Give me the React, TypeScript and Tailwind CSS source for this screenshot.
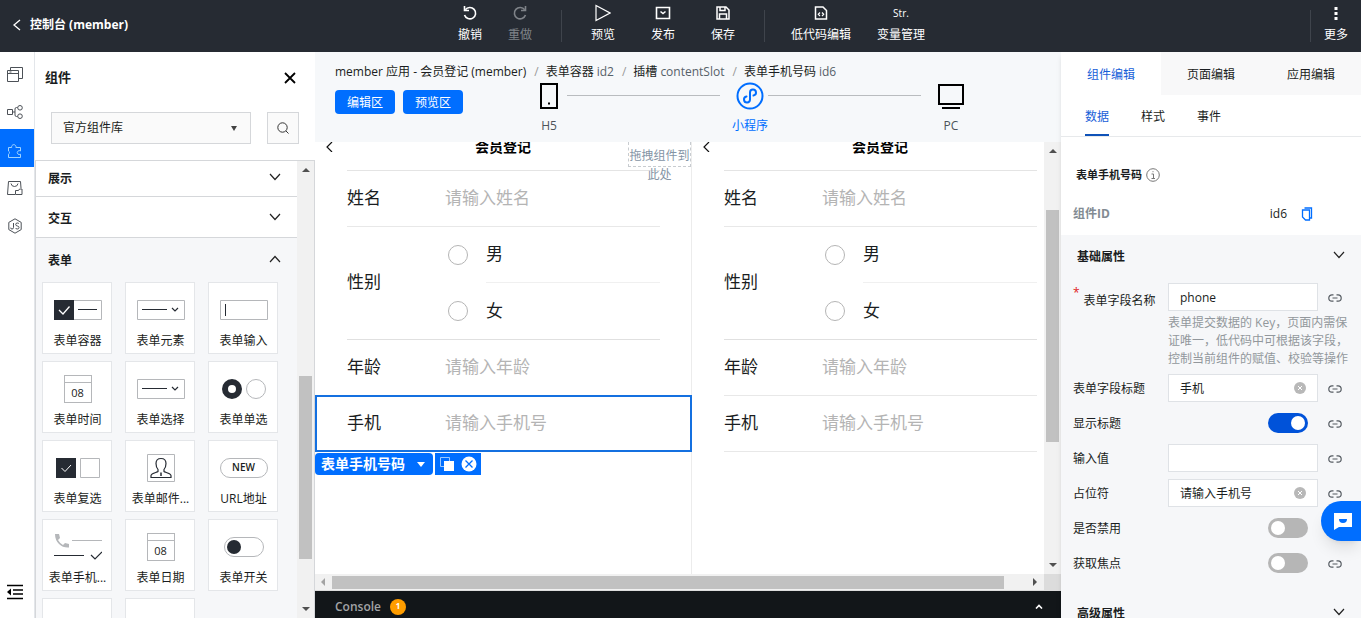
import { useState } from "react";
import type { ReactNode } from "react";

const toolGroups = [
  {
    divider: "",
    tools: [
      { label: "撤销", icon: <UndoIcon />, width: "w-[50px]" },
      { label: "重做", icon: <RedoIcon />, width: "w-[50px]", disabled: true },
    ],
  },
  {
    divider: "ml-4 mr-[11px]",
    tools: [
      { label: "预览", icon: <PlayIcon />, width: "w-[60px]" },
      { label: "发布", icon: <PublishIcon />, width: "w-[60px]" },
      { label: "保存", icon: <SaveIcon />, width: "w-[60px]" },
    ],
  },
  {
    divider: "ml-[11px] mr-4",
    tools: [
      { label: "低代码编辑", icon: <CodeFileIcon />, width: "w-[80px]" },
      { label: "变量管理", icon: <span className="text-[10px] leading-4">Str.</span>, width: "w-[80px]" },
    ],
  },
];

const components = [
  { label: "表单容器", icon: <ContainerGlyph /> },
  { label: "表单元素", icon: <SelectGlyph /> },
  { label: "表单输入", icon: <InputGlyph /> },
  { label: "表单时间", icon: <CalendarGlyph /> },
  { label: "表单选择", icon: <SelectGlyph /> },
  { label: "表单单选", icon: <RadioGlyph /> },
  { label: "表单复选", icon: <CheckGlyph /> },
  { label: "表单邮件...", icon: <PersonGlyph /> },
  { label: "URL地址", icon: <UrlGlyph /> },
  { label: "表单手机...", icon: <PhoneGlyph /> },
  { label: "表单日期", icon: <CalendarGlyph /> },
  { label: "表单开关", icon: <SwitchGlyph /> },
  { label: "", icon: null },
  { label: "", icon: null },
];

export default function App() {
  return (
    <div className="flex h-screen flex-col overflow-hidden bg-white font-['Open_Sans','Noto_Sans_CJK_SC',sans-serif] text-xs text-[#1a1d21]">
      <TopBar />
      <div className="flex min-h-0 flex-1">
        <SideNav />
        <ComponentPanel />
        <Workspace />
        <PropertyPanel />
      </div>
      <button
        aria-label="客服"
        className="fixed right-0 bottom-[77px] z-20 flex h-10 w-10 items-center justify-center rounded-l-full bg-[#006eff] shadow-lg"
      >
        <svg width="20" height="20" viewBox="0 0 20 20" className="ml-1">
          <path d="M1 2h18v14H6l-5 3z" fill="#fff" />
          <path d="M6 8h8a4 4 0 0 1-8 0z" fill="#006eff" />
        </svg>
      </button>
    </div>
  );
}

function TopBar() {
  return (
    <header className="flex h-[52px] shrink-0 items-center bg-[#262b33] text-white">
      <a href="#" className="flex w-[445px] shrink-0 items-center gap-2 pb-0.5 pl-3 font-bold">
        <svg width="10" height="12" viewBox="0 0 10 12" fill="none" stroke="currentColor" strokeWidth="1.3">
          <path d="M8 1 2 6l6 5" />
        </svg>
        控制台 (member)
      </a>
      {toolGroups.map((group, i) => (
        <div key={i} className="flex items-center">
          {group.divider && <div className={`h-8 w-px bg-[#3f444c] ${group.divider}`} />}
          {group.tools.map((tool) => (
            <ToolButton key={tool.label} {...tool} />
          ))}
        </div>
      ))}
      <div className="ml-auto flex items-center">
        <div className="h-8 w-px bg-[#3f444c]" />
        <ToolButton
          label="更多"
          width="w-[50px]"
          icon={
            <svg width="4" height="16" viewBox="0 0 4 16" fill="#fff">
              <path d="M.5 2h3v3h-3zM.5 7h3v3h-3zM.5 12h3v3h-3z" />
            </svg>
          }
        />
      </div>
    </header>
  );
}

function ToolButton({
  label,
  icon,
  width,
  disabled,
}: {
  label: string;
  icon: ReactNode;
  width: string;
  disabled?: boolean;
}) {
  return (
    <button
      disabled={disabled}
      className={`${width} flex flex-col items-center gap-1 pb-0.5 disabled:text-[#7f8389]`}
    >
      <span className="flex h-4 items-center">{icon}</span>
      <span className="leading-5">{label}</span>
    </button>
  );
}

function SideNav() {
  const items = [
    { name: "页面", icon: <PagesIcon /> },
    { name: "流程", icon: <FlowIcon /> },
    { name: "组件", icon: <PuzzleIcon />, active: true },
    { name: "素材", icon: <AssetIcon /> },
    { name: "JS", icon: <JsIcon /> },
  ];
  return (
    <nav className="flex w-[35px] shrink-0 flex-col border-r border-[#e3e6ea] pt-px">
      {items.map((item) => (
        <button
          key={item.name}
          aria-label={item.name}
          className={`flex h-[38px] w-full items-center justify-center pt-1 pr-1 ${
            item.active ? "bg-[#006eff] text-[#9fd3ff]" : "text-[#4c5157]"
          }`}
        >
          {item.icon}
        </button>
      ))}
      <button aria-label="收起" className="mt-auto mb-[18px] flex justify-center pr-1 text-black">
        <svg width="18" height="16" viewBox="0 0 18 16" fill="none" stroke="currentColor" strokeWidth="1.6">
          <path d="M1 1.5h16M7 6h10M7 10h10M1 14.5h16" />
          <path d="M5 4.5v7L1 8z" fill="currentColor" stroke="none" />
        </svg>
      </button>
    </nav>
  );
}

function ComponentPanel() {
  return (
    <aside className="flex w-[280px] shrink-0 flex-col">
      <div className="flex h-[60px] shrink-0 items-center justify-between pr-[19px] pb-2 pl-2.5">
        <h2 className="text-[13px] font-bold">组件</h2>
        <button aria-label="关闭">
          <svg width="12" height="12" viewBox="0 0 12 12" stroke="#000" strokeWidth="1.8">
            <path d="m1 1 10 10M11 1 1 11" />
          </svg>
        </button>
      </div>
      <div className="flex h-12 shrink-0 gap-4 pl-4">
        <div className="relative h-8 w-[200px]">
          <select
            aria-label="组件库"
            className="h-full w-full appearance-none border border-[#d5d7da] bg-[#fafafa] px-[11px]"
          >
            <option>官方组件库</option>
          </select>
          <svg width="6" height="5" viewBox="0 0 6 5" className="pointer-events-none absolute top-3.5 right-3.5">
            <path d="M0 0h6L3 5z" fill="#444" />
          </svg>
        </div>
        <button
          aria-label="搜索"
          className="flex h-8 w-8 items-center justify-center border border-[#d5d7da] bg-[#fafafa]"
        >
          <svg width="12" height="12" viewBox="0 0 12 12" fill="none" stroke="#333">
            <circle cx="5.5" cy="5.5" r="4.7" />
            <path d="m9 9 2.5 2.5" />
          </svg>
        </button>
      </div>
      <div className="flex min-h-0 flex-1 border border-b-0 border-[#d5d7da]">
        <div className="min-w-0 flex-1 overflow-hidden bg-[#f6f7f9]">
          <Section title="展示" className="h-9 border-b border-[#d5d7da] bg-white" />
          <Section title="交互" className="h-[41px] border-b border-[#d5d7da] bg-white pt-1" />
          <Section title="表单" open className="h-11 pt-0.5" />
          <div className="grid grid-cols-[repeat(3,70px)] gap-x-[13px] gap-y-[7px] pl-1.5">
            {components.map((item, i) => (
              <button
                key={i}
                aria-label={item.label || "组件"}
                className="flex h-[72px] flex-col items-center border border-[#e4e6e9] bg-white pt-[11px] pl-px"
              >
                <span className="flex h-8 items-center">{item.icon}</span>
                <span className="mt-[5px] whitespace-nowrap leading-5">{item.label}</span>
              </button>
            ))}
          </div>
        </div>
        <VerticalScrollbar before="flex-[202]" thumb="flex-[181]" after="flex-[48]" />
      </div>
    </aside>
  );
}

function Section({ title, open, className }: { title: string; open?: boolean; className: string }) {
  return (
    <button className={`flex w-full items-center justify-between pr-4 pl-3 font-bold ${className}`}>
      {title}
      <Chevron up={open} />
    </button>
  );
}

function Chevron({ up }: { up?: boolean }) {
  return (
    <svg width="12" height="8" viewBox="0 0 12 8" fill="none" stroke="#222" strokeWidth="1.2" className="mb-1">
      <path d={up ? "m1 7 5-5.5L11 7" : "m1 1 5 5.5L11 1"} />
    </svg>
  );
}

function VerticalScrollbar({ before, thumb, after }: { before: string; thumb: string; after: string }) {
  return (
    <div className="flex w-[17px] shrink-0 flex-col items-center bg-[#f1f1f1] py-[7px]">
      <svg width="8" height="4" viewBox="0 0 8 4" className="shrink-0">
        <path d="M0 4h8L4 0z" fill="#505050" />
      </svg>
      <div className={before} />
      <div className={`w-[13px] bg-[#c1c1c1] ${thumb}`} />
      <div className={after} />
      <svg width="8" height="4" viewBox="0 0 8 4" className="shrink-0">
        <path d="M0 0h8L4 4z" fill="#505050" />
      </svg>
    </div>
  );
}

function Workspace() {
  return (
    <main className="flex min-w-0 flex-1 flex-col">
      <div className="h-[90px] shrink-0 bg-[#f6f8fa] pl-5">
        <Breadcrumb />
        <div className="flex items-start">
          <div className="flex gap-2 pt-2">
            <button className="h-6 w-[60px] rounded-sm bg-[#006eff] pt-0.5 text-white">编辑区</button>
            <button className="h-6 w-[60px] rounded-sm bg-[#006eff] pt-0.5 text-white">预览区</button>
          </div>
          <DeviceSteps />
        </div>
      </div>
      <div className="flex min-h-0 flex-1">
        <div className="flex min-w-0 flex-1 overflow-hidden">
          <PhoneCanvas id="edit" editing />
          <PhoneCanvas id="preview" />
        </div>
        <VerticalScrollbar before="flex-[56]" thumb="flex-[230]" after="flex-[120]" />
      </div>
      <div className="flex h-[17px] shrink-0 items-center border-b border-[#dcdcdc] bg-[#f1f1f1]">
        <svg width="4" height="8" viewBox="0 0 4 8" className="mr-[7px] ml-1.5">
          <path d="M4 0v8L0 4z" fill="#a3a3a3" />
        </svg>
        <div className="h-[13px] flex-[672] bg-[#c1c1c1]" />
        <div className="flex-[29]" />
        <svg width="4" height="8" viewBox="0 0 4 8" className="mr-[7px]">
          <path d="M0 0v8l4-4z" fill="#505050" />
        </svg>
        <div className="h-full w-[17px] bg-[#dcdcdc]" />
      </div>
      <div className="flex h-[27px] shrink-0 items-center bg-[#121619] pt-1 pr-[18px] pl-5">
        <span className="font-semibold text-[#a2a4a6]">Console</span>
        <span className="ml-[9px] flex h-4 w-4 items-center justify-center rounded-full bg-[#ff9d00] text-[8px] font-bold text-white">
          1
        </span>
        <button aria-label="展开控制台" className="ml-auto">
          <svg width="8" height="5" viewBox="0 0 8 5" fill="none" stroke="#fff" strokeWidth="1.6">
            <path d="m1 4.5 3-3 3 3" />
          </svg>
        </button>
      </div>
    </main>
  );
}

function Breadcrumb() {
  const crumbs = [
    ["表单容器", "id2"],
    ["插槽", "contentSlot"],
    ["表单手机号码", "id6"],
  ];
  return (
    <div className="flex h-[30px] items-center pt-2.5 whitespace-nowrap">
      <span className="mr-2">member 应用 - 会员登记 (member)</span>
      {crumbs.map(([name, id]) => (
        <span key={id} className="mr-2 flex">
          <span className="mr-[7px] text-[#999]">/</span>
          {name}
          <span className="ml-[3px] text-[#576169]">{id}</span>
        </span>
      ))}
    </div>
  );
}

function DeviceSteps() {
  return (
    <div className="ml-[68px] flex text-[#4c5359]">
      <Device label="H5">
        <svg width="18" height="26" viewBox="0 0 18 26" fill="none" stroke="#000" strokeWidth="2">
          <path d="M1 1h16v24H1z" />
          <path d="M8 20.5h2" />
        </svg>
      </Device>
      <div className="mt-[13px] mr-3 h-px w-[153px] bg-[#b9bcbf]" />
      <Device label="小程序" active>
        <svg width="28" height="28" viewBox="0 0 28 28" fill="none" stroke="#006eff" strokeWidth="2">
          <circle cx="14" cy="14" r="12.5" />
          <path d="M10.5 14.5a3 3 0 1 0 3.5 3v-7a3 3 0 1 1 3.5 3" strokeLinecap="round" />
        </svg>
      </Device>
      <div className="mt-[13px] mr-3 h-px w-[153px] bg-[#b9bcbf]" />
      <Device label="PC">
        <svg width="26" height="26" viewBox="0 0 26 26" fill="none" stroke="#000" strokeWidth="2">
          <path d="M1 2h24v19H1zM4 25h18" />
        </svg>
      </Device>
    </div>
  );
}

function Device({ label, active, children }: { label: string; active?: boolean; children: ReactNode }) {
  return (
    <button className={`flex w-9 flex-col items-center ${active ? "text-[#006eff]" : ""}`}>
      <span className="flex h-7 items-center">{children}</span>
      <span className="mt-1.5 leading-5 whitespace-nowrap">{label}</span>
    </button>
  );
}

function PhoneCanvas({ id, editing }: { id: string; editing?: boolean }) {
  return (
    <section className="relative w-[377px] shrink-0 border-r border-[#ececec] pr-[31px] pl-8 text-[17px]">
      <div className="-mx-8 flex h-7 items-start px-2.5">
        <button aria-label="返回">
          <svg width="9" height="10" viewBox="0 0 9 10" fill="none" stroke="#111" strokeWidth="1.2">
            <path d="M7 0 2 5l5 5" />
          </svg>
        </button>
        <h3 className="-mt-[5px] flex-1 pr-2.5 text-center text-sm leading-5 font-bold text-black">会员登记</h3>
      </div>
      {editing && (
        <div className="absolute top-0 right-0 h-[25px] w-[63px] border border-t-0 border-dashed border-[#c8ccd0] pt-1 text-center text-xs leading-[19px] text-[#8494a5]">
          拖拽组件到此处
        </div>
      )}
      <div className="h-px bg-[#e4e4e4]" />
      <Field id={`${id}-name`} label="姓名" placeholder="请输入姓名" />
      <fieldset aria-label="性别" className="flex items-center border-b border-[#e0e0e0]">
        <span className="w-[98px] pb-0.5">性别</span>
        <div className="flex-1">
          <Option id={id} label="男" className="border-b border-[#f0f0f0]" />
          <Option id={id} label="女" className="" />
        </div>
      </fieldset>
      <Field id={`${id}-age`} label="年龄" placeholder="请输入年龄" />
      <div className="relative">
        <Field id={`${id}-phone`} label="手机" placeholder="请输入手机号" />
        {editing && (
          <>
            <div className="pointer-events-none absolute -top-px -right-8 bottom-0 -left-8 border-2 border-[#1470e0]" />
            <div className="absolute top-full -left-8 mt-px flex gap-0.5">
              <button className="flex h-[22px] w-[118px] items-center justify-between rounded-sm bg-[#006eff] pr-2 pl-1.5 text-sm font-bold text-white">
                表单手机号码
                <svg width="8" height="5" viewBox="0 0 8 5">
                  <path d="M0 0h8L4 5z" fill="#fff" />
                </svg>
              </button>
              <div className="flex h-[22px] w-[46px] items-center justify-between bg-[#006eff] px-1">
                <button aria-label="复制">
                  <svg width="16" height="16" viewBox="0 0 16 16">
                    <path d="M1.5 1.5h9v9h-9z" fill="none" stroke="#9cc9ff" />
                    <path d="M5 5h10v10H5z" fill="#fff" />
                  </svg>
                </button>
                <button aria-label="删除">
                  <svg width="16" height="16" viewBox="0 0 16 16">
                    <circle cx="8" cy="8" r="7.5" fill="#fff" />
                    <path d="m4.5 4.5 7 7m0-7-7 7" stroke="#006eff" strokeWidth="1.3" />
                  </svg>
                </button>
              </div>
            </div>
          </>
        )}
      </div>
    </section>
  );
}

function Field({ id, label, placeholder }: { id: string; label: string; placeholder: string }) {
  return (
    <div className="flex h-14 items-center border-b border-[#e8e8e8] pb-px">
      <label htmlFor={id} className="w-[98px]">
        {label}
      </label>
      <input id={id} placeholder={placeholder} className="min-w-0 flex-1 outline-none placeholder:text-[#b4b4b4]" />
    </div>
  );
}

function Option({ id, label, className }: { id: string; label: string; className: string }) {
  return (
    <label className="flex h-14 items-center gap-[18px] pl-[3px]">
      <input
        type="radio"
        name={`${id}-gender`}
        className="h-5 w-5 appearance-none rounded-full border border-[#b5b5b5] checked:border-[6px] checked:border-[#006eff]"
      />
      <span className={`flex h-full flex-1 items-center ${className}`}>{label}</span>
    </label>
  );
}

function PropertyPanel() {
  const [name, setName] = useState("phone");
  const [title, setTitle] = useState("手机");
  const [value, setValue] = useState("");
  const [placeholder, setPlaceholder] = useState("请输入手机号");
  return (
    <aside className="z-10 flex w-[300px] shrink-0 flex-col overflow-hidden bg-white shadow-md">
      <div className="flex h-[43px] shrink-0 bg-[#f8f8f9]">
        <button className="w-[100px] bg-white pt-0.5 text-[#1760d8]">组件编辑</button>
        <button className="w-[100px] pt-0.5">页面编辑</button>
        <button className="w-[100px] pt-0.5">应用编辑</button>
      </div>
      <div className="flex h-[42px] shrink-0 gap-8 border-b border-[#e7e9eb] pl-6">
        <button className="border-b-2 border-[#0f52b8] pt-1 text-[#1760d8]">数据</button>
        <button className="border-b-2 border-transparent pt-1">样式</button>
        <button className="border-b-2 border-transparent pt-1">事件</button>
      </div>
      <div className="h-[98px] shrink-0 px-3 pt-7">
        <div className="flex h-5 items-center gap-1 pl-[3px] text-[11px] font-bold">
          表单手机号码
          <svg width="14" height="14" viewBox="0 0 14 14" fill="none" stroke="#777">
            <circle cx="7" cy="7" r="6.3" />
            <path d="M5.5 6h2v4.5M5.5 10.5h3.5M6.5 3.7h1" />
          </svg>
        </div>
        <div className="mt-[19px] flex h-5 items-center">
          <span className="font-bold text-[#838b93]">组件ID</span>
          <span className="ml-auto">id6</span>
          <button aria-label="复制ID" className="mr-9 ml-3.5">
            <svg width="12" height="14" viewBox="0 0 12 14" fill="none" stroke="#006eff" strokeWidth="1.3">
              <path d="M3.5 1h7v10h-2" />
              <path d="M1.5 3h7v10h-4l-3-3z" />
            </svg>
          </button>
        </div>
      </div>
      <div className="flex-1 bg-[#f6f7f9]">
        <GroupTitle title="基础属性" />
        <div className="flex flex-col gap-[7px] pt-1 pl-3">
          <div>
            <PropRow id="field-name" label="表单字段名称" required>
              <TextBox id="field-name" value={name} onChange={setName} />
            </PropRow>
            <p className="mt-[3px] -mb-px ml-[95px] w-[184px] leading-[18px] text-[#92979c]">
              表单提交数据的 Key，页面内需保证唯一，低代码中可根据该字段，控制当前组件的赋值、校验等操作
            </p>
          </div>
          <PropRow id="field-title" label="表单字段标题">
            <TextBox id="field-title" value={title} onChange={setTitle} clearable />
          </PropRow>
          <PropRow id="show-title" label="显示标题">
            <Toggle id="show-title" defaultChecked />
          </PropRow>
          <PropRow id="field-value" label="输入值">
            <TextBox id="field-value" value={value} onChange={setValue} />
          </PropRow>
          <PropRow id="field-placeholder" label="占位符">
            <TextBox id="field-placeholder" value={placeholder} onChange={setPlaceholder} clearable />
          </PropRow>
          <PropRow id="field-disabled" label="是否禁用">
            <Toggle id="field-disabled" />
          </PropRow>
          <PropRow id="field-focus" label="获取焦点">
            <Toggle id="field-focus" />
          </PropRow>
        </div>
        <div className="pt-[15px]">
          <GroupTitle title="高级属性" />
        </div>
      </div>
    </aside>
  );
}

function GroupTitle({ title }: { title: string }) {
  return (
    <button className="flex h-11 w-full items-center justify-between px-4 font-bold">
      {title}
      <Chevron />
    </button>
  );
}

function PropRow({
  id,
  label,
  required,
  children,
}: {
  id: string;
  label: string;
  required?: boolean;
  children: ReactNode;
}) {
  return (
    <div className="flex h-7 items-center">
      <label htmlFor={id} className={`flex w-[95px] whitespace-nowrap ${required ? "pt-2" : "pt-0.5"}`}>
        {required && <span className="-mt-2 mr-1 text-[#e02020]">*</span>}
        {label}
      </label>
      <div className="flex w-[150px] justify-end">{children}</div>
      <button aria-label={`绑定${label}`} className="ml-2.5 pt-0.5">
        <svg width="14" height="8" viewBox="0 0 14 8" fill="none" stroke="#555b61" strokeWidth="1.2">
          <path d="M5.5.8H4a3.2 3.2 0 0 0 0 6.4h1.5M8.5.8H10a3.2 3.2 0 0 1 0 6.4H8.5M4.5 4h5" />
        </svg>
      </button>
    </div>
  );
}

function TextBox({
  id,
  value,
  onChange,
  clearable,
}: {
  id: string;
  value: string;
  onChange: (value: string) => void;
  clearable?: boolean;
}) {
  return (
    <div className="flex h-7 w-full items-center border border-[#dfe2e6] bg-white px-[11px]">
      <input
        id={id}
        value={value}
        onChange={(e) => onChange(e.target.value)}
        className="min-w-0 flex-1 pt-0.5 outline-none"
      />
      {clearable && (
        <button aria-label="清空" onClick={() => onChange("")}>
          <svg width="12" height="12" viewBox="0 0 12 12">
            <circle cx="6" cy="6" r="6" fill="#b8b8b8" />
            <path d="m4 4 4 4m0-4L4 8" stroke="#fff" />
          </svg>
        </button>
      )}
    </div>
  );
}

function Toggle({ id, defaultChecked }: { id: string; defaultChecked?: boolean }) {
  return (
    <input
      id={id}
      type="checkbox"
      defaultChecked={defaultChecked}
      className="mr-2.5 flex h-5 w-10 appearance-none items-center rounded-full bg-[#b6b6b6] px-[3px] before:h-3.5 before:w-3.5 before:rounded-full before:bg-white checked:justify-end checked:bg-[#0052d9]"
    />
  );
}

/* toolbar icons */

function UndoIcon() {
  return (
    <svg width="16" height="16" viewBox="0 0 16 16" fill="none" stroke="currentColor" strokeWidth="1.6">
      <path d="M3.3 4.8a5.7 5.7 0 1 1-.8 5.2" />
      <path d="M2.5 1v4.5H7" />
    </svg>
  );
}

function RedoIcon() {
  return (
    <svg width="16" height="16" viewBox="0 0 16 16" fill="none" stroke="currentColor" strokeWidth="1.6">
      <path d="M13.5 10a5.7 5.7 0 1 1-.8-5.2" />
      <path d="M13.5 1v4.5H9" />
    </svg>
  );
}

function PlayIcon() {
  return (
    <svg width="16" height="18" viewBox="0 0 16 18" fill="none" stroke="currentColor" strokeWidth="1.2">
      <path d="M1 1.5 15 9 1 16.5z" />
    </svg>
  );
}

function PublishIcon() {
  return (
    <svg width="16" height="14" viewBox="0 0 16 14" fill="none" stroke="currentColor" strokeWidth="1.6">
      <path d="M1.5 1.5h13v11h-13z" />
      <path d="m5.5 5.5 2.5 2 2.5-2" />
    </svg>
  );
}

function SaveIcon() {
  return (
    <svg width="14" height="14" viewBox="0 0 14 14" fill="none" stroke="currentColor" strokeWidth="1.5">
      <path d="M1 1h9l3 3v9H1z" />
      <path d="M4 1v3.5h5V1M3.5 13V8h7v5" />
    </svg>
  );
}

function CodeFileIcon() {
  return (
    <svg width="14" height="14" viewBox="0 0 14 14" fill="none" stroke="currentColor" strokeWidth="1.5">
      <path d="M1.5 1H9l3.5 3.5V13h-11z" />
      <path d="M6 6.5 4.3 8.3 6 10M8 6.5l1.7 1.8L8 10" strokeWidth="1.2" />
    </svg>
  );
}

/* side navigation icons */

function PagesIcon() {
  return (
    <svg width="16" height="16" viewBox="0 0 16 16" fill="none" stroke="currentColor">
      <path d="M.5 4.5h11v11H.5zM.5 7.5h11M3.5 4.5v-3h12v11h-4M2.5 6h2" />
    </svg>
  );
}

function FlowIcon() {
  return (
    <svg width="16" height="14" viewBox="0 0 16 14" fill="none" stroke="currentColor">
      <path d="M.5 4.5h5v5h-5zM5.5 7H8M10.5 2.5h-1Q8 2.5 8 4v6q0 1.5 1.5 1.5h1" />
      <circle cx="13" cy="2.8" r="2.3" />
      <circle cx="13" cy="11.2" r="2.3" />
    </svg>
  );
}

function PuzzleIcon() {
  return (
    <svg width="16" height="16" viewBox="0 0 16 16" fill="none" stroke="currentColor">
      <path d="M1.5 5.5h3.2a2.2 2.2 0 1 1 4.2 0h4.6V9a2 2 0 1 0 0 3.2v3.3h-12v-3.3a1.8 1.8 0 0 0 0-3.2z" />
    </svg>
  );
}

function AssetIcon() {
  return (
    <svg width="16" height="16" viewBox="0 0 16 16" fill="none" stroke="currentColor">
      <path d="M8 14.5H.5l1-13h12L14 8M4 3.5q.5 3 3.5 3t3.5-3M8.5 10.5h3l1-1.5h2.5v5.5H8.5z" />
    </svg>
  );
}

function JsIcon() {
  return (
    <svg width="16" height="16" viewBox="0 0 16 16" fill="none" stroke="currentColor">
      <path d="m8 .8 6.2 3.6v7.2L8 15.2l-6.2-3.6V4.4z" />
      <path d="M6.5 5v4.5q0 1.5-1.5 1.5t-1.3-1.3M12 5.8Q11.5 5 10.3 5q-1.6 0-1.6 1.5 0 1.2 1.7 1.500T12 9.5q0 1.5-1.7 1.5-1.3 0-1.8-1" />
    </svg>
  );
}

/* glyphs on the component cards */

function ContainerGlyph() {
  return (
    <svg width="48" height="20" viewBox="0 0 48 20" fill="none">
      <path d="M.5.5h47v19H.5z" stroke="#b5b7ba" />
      <path d="M0 0h20v20H0z" fill="#262b33" />
      <path d="m5 10 4 4 6.5-7.5" stroke="#fff" strokeWidth="1.3" />
      <path d="M24 9.5h19" stroke="#262b33" />
    </svg>
  );
}

function SelectGlyph() {
  return (
    <svg width="48" height="20" viewBox="0 0 48 20" fill="none">
      <path d="M.5.5h47v19H.5z" stroke="#b5b7ba" />
      <path d="M5 9.5h25M35 8l3 3 3-3" stroke="#262b33" strokeWidth="1.2" />
    </svg>
  );
}

function InputGlyph() {
  return (
    <svg width="48" height="20" viewBox="0 0 48 20" fill="none">
      <path d="M.5.5h47v19H.5z" stroke="#b5b7ba" />
      <path d="M5.5 4v12" stroke="#262b33" />
    </svg>
  );
}

function CalendarGlyph() {
  return (
    <span className="flex h-7 w-7 flex-col border border-[#b5b7ba] text-[11px] leading-[19px]">
      <span className="h-[7px] border-b border-[#b5b7ba]" />
      08
    </span>
  );
}

function RadioGlyph() {
  return (
    <svg width="44" height="20" viewBox="0 0 44 20" fill="none">
      <circle cx="10" cy="10" r="7" stroke="#262b33" strokeWidth="6" />
      <circle cx="34" cy="10" r="9.5" stroke="#b5b7ba" />
    </svg>
  );
}

function CheckGlyph() {
  return (
    <svg width="44" height="20" viewBox="0 0 44 20" fill="none">
      <path d="M0 0h20v20H0z" fill="#262b33" />
      <path d="m5.5 10 3.5 3.5L15 7" stroke="#fff" />
      <path d="M24.5.5h19v19h-19z" stroke="#b5b7ba" />
    </svg>
  );
}

function PersonGlyph() {
  return (
    <svg width="28" height="28" viewBox="0 0 28 28" fill="none">
      <path d="M.5.5h27v27H.5z" stroke="#b5b7ba" />
      <path
        d="M11 15.5C9 13 9 11.5 9 9.5c0-3 2-5 5-5s5 2 5 5c0 2 0 3.5-2 6v2c1 1 6.5 1.5 7 4v2H4v-2c.5-2.5 6-3 7-4z"
        stroke="#262b33"
        strokeWidth="1.2"
      />
      <path d="M14 18.5V22" stroke="#262b33" strokeWidth="1.5" />
    </svg>
  );
}

function UrlGlyph() {
  return (
    <span className="flex h-5 w-12 items-center justify-center rounded-full border border-[#b5b7ba] text-[10px] font-semibold">
      NEW
    </span>
  );
}

function PhoneGlyph() {
  return (
    <svg width="48" height="28" viewBox="0 0 48 28" fill="none">
      <path d="M1 1h4l1 4-2 2q2 3.5 5 5l2-2 4 1v3.5q-6 .5-10-3.5T1 1z" fill="#b5b7ba" />
      <path d="M18 7.5h30" stroke="#b5b7ba" />
      <path d="M0 22.5h30M37 22l4 4 7-7" stroke="#262b33" strokeWidth="1.2" />
    </svg>
  );
}

function SwitchGlyph() {
  return (
    <svg width="40" height="20" viewBox="0 0 40 20" fill="none">
      <rect x=".5" y=".5" width="39" height="19" rx="9.5" stroke="#b5b7ba" />
      <circle cx="10" cy="10" r="7" fill="#262b33" />
    </svg>
  );
}
